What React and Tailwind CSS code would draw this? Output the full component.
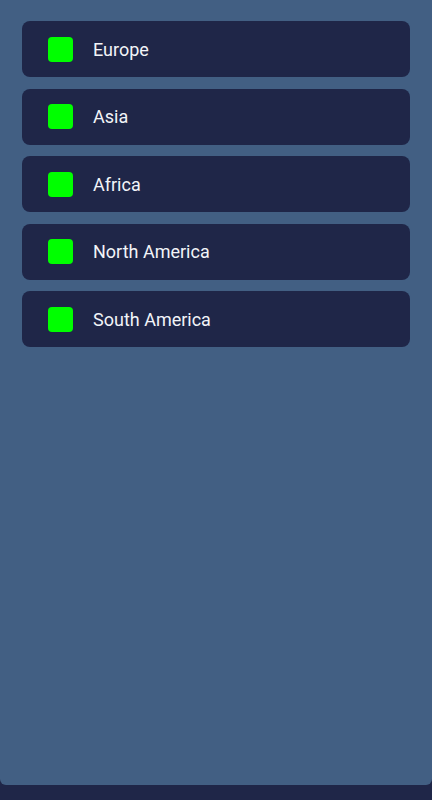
const regions = ['Europe', 'Asia', 'Africa', 'North America', 'South America'];

export default function App() {
  return (
    <div className="h-[800px] w-[432px] flex flex-col bg-[#1f2648] font-['Roboto',sans-serif] overflow-hidden">
      <div className="flex-1 bg-[#425f83] rounded-b-[6px] px-[22px] pt-[21px] flex flex-col gap-[11.5px]">
        {regions.map((name) => (
          <div
            key={name}
            className="h-[56px] flex items-center bg-[#1f2648] rounded-[8px] pl-[26px]"
          >
            <span className="w-[25px] h-[25px] rounded-[4px] bg-[#00ff00]" />
            <span className="ml-[20px] text-[18px] text-[#f2f4f8]">{name}</span>
          </div>
        ))}
      </div>
      <div className="h-[15px]" />
    </div>
  );
}
